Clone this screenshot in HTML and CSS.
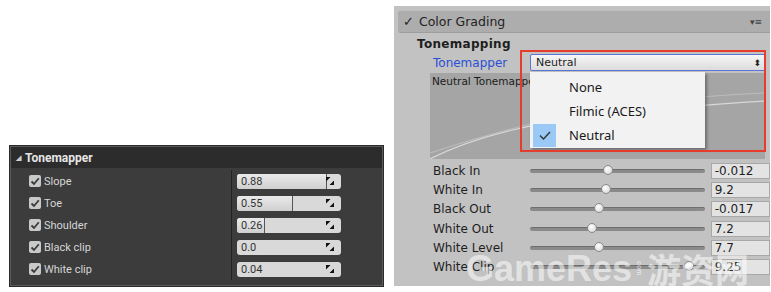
FILE: index.html
```html
<!DOCTYPE html>
<html>
<head>
<meta charset="utf-8">
<link rel="stylesheet" href="styles.css">
</head>
<body>
<div class="page">
  <div class="ue">
    <div class="ue-head"><span class="tri">◢</span>Tonemapper</div>
    <div class="ue-body">
      <div class="ue-row"><div class="ue-name"><span class="cb"><svg viewBox="0 0 12 12" width="12" height="12"><path d="M2.5 6.5 L5 9 L9.8 3.2" fill="none" stroke="#3a3a3a" stroke-width="1.8"/></svg></span>Slope</div><div class="ue-val"><div class="num"><div class="fill" style="width:86%"></div><span class="nt">0.88</span><svg class="rs" viewBox="0 0 8 8" width="8" height="8"><path d="M0 0h4.5L0 4.5z M8 8H3.5l4.5-4.5z" fill="#111"/></svg></div></div></div>
      <div class="ue-row"><div class="ue-name"><span class="cb"><svg viewBox="0 0 12 12" width="12" height="12"><path d="M2.5 6.5 L5 9 L9.8 3.2" fill="none" stroke="#3a3a3a" stroke-width="1.8"/></svg></span>Toe</div><div class="ue-val"><div class="num"><div class="fill" style="width:53%"></div><span class="nt">0.55</span><svg class="rs" viewBox="0 0 8 8" width="8" height="8"><path d="M0 0h4.5L0 4.5z M8 8H3.5l4.5-4.5z" fill="#111"/></svg></div></div></div>
      <div class="ue-row"><div class="ue-name"><span class="cb"><svg viewBox="0 0 12 12" width="12" height="12"><path d="M2.5 6.5 L5 9 L9.8 3.2" fill="none" stroke="#3a3a3a" stroke-width="1.8"/></svg></span>Shoulder</div><div class="ue-val"><div class="num"><div class="fill" style="width:26%"></div><span class="nt">0.26</span><svg class="rs" viewBox="0 0 8 8" width="8" height="8"><path d="M0 0h4.5L0 4.5z M8 8H3.5l4.5-4.5z" fill="#111"/></svg></div></div></div>
      <div class="ue-row"><div class="ue-name"><span class="cb"><svg viewBox="0 0 12 12" width="12" height="12"><path d="M2.5 6.5 L5 9 L9.8 3.2" fill="none" stroke="#3a3a3a" stroke-width="1.8"/></svg></span>Black clip</div><div class="ue-val"><div class="num"><span class="nt">0.0</span><svg class="rs" viewBox="0 0 8 8" width="8" height="8"><path d="M0 0h4.5L0 4.5z M8 8H3.5l4.5-4.5z" fill="#111"/></svg></div></div></div>
      <div class="ue-row"><div class="ue-name"><span class="cb"><svg viewBox="0 0 12 12" width="12" height="12"><path d="M2.5 6.5 L5 9 L9.8 3.2" fill="none" stroke="#3a3a3a" stroke-width="1.8"/></svg></span>White clip</div><div class="ue-val"><div class="num"><span class="nt">0.04</span><svg class="rs" viewBox="0 0 8 8" width="8" height="8"><path d="M0 0h4.5L0 4.5z M8 8H3.5l4.5-4.5z" fill="#111"/></svg></div></div></div>
    </div>
  </div>

  <div class="unity">
    <div class="u-head"><span class="u-check">✓</span><span class="u-title">Color Grading</span><span class="u-menu">▾≡</span></div>
    <div class="u-section">Tonemapping</div>
    <div class="u-row u-tm"><div class="u-label blue">Tonemapper</div><div class="u-drop"><span>Neutral</span><span class="u-arr">⬍</span></div></div>
    <div class="u-graph">
      <span class="g-title">Neutral Tonemapper</span>
      <svg class="g-curve" viewBox="0 0 335 86" width="335" height="86" preserveAspectRatio="none"><path d="M0 86 C60 55 140 40 335 28" fill="none" stroke="#d8d8d8" stroke-width="1.2"/><path d="M0 80 C120 40 220 25 335 20" fill="none" stroke="#bdbdbd" stroke-width="1"/></svg>
    </div>
    <div class="u-sliders">
      <div class="u-row"><div class="u-label">Black In</div><div class="track"><span class="thumb" style="left:78px"></span></div><div class="field">-0.012</div></div>
      <div class="u-row"><div class="u-label">White In</div><div class="track"><span class="thumb" style="left:76px"></span></div><div class="field">9.2</div></div>
      <div class="u-row"><div class="u-label">Black Out</div><div class="track"><span class="thumb" style="left:69px"></span></div><div class="field">-0.017</div></div>
      <div class="u-row"><div class="u-label">White Out</div><div class="track"><span class="thumb" style="left:62px"></span></div><div class="field">7.2</div></div>
      <div class="u-row"><div class="u-label">White Level</div><div class="track"><span class="thumb" style="left:69px"></span></div><div class="field">7.7</div></div>
      <div class="u-row"><div class="u-label">White Clip</div><div class="track"><span class="thumb" style="left:159px"></span></div><div class="field">9.25</div></div>
    </div>

    <div class="u-menu-pop">
      <div class="mi"><span class="mc"></span>None</div>
      <div class="mi"><span class="mc"></span>Filmic (ACES)</div>
      <div class="mi"><span class="mc on"><svg viewBox="0 0 16 16" width="16" height="16"><path d="M3 8.5 L6.5 12 L13 5" fill="none" stroke="#333" stroke-width="1.4"/></svg></span>Neutral</div>
    </div>
    <div class="red-box"></div>
    <div class="watermark"><span class="wm-en">GameRes</span><span class="wm-com">com</span><span class="wm-cn">游资网</span></div>
  </div>
</div>
</body>
</html>
```

FILE: styles.css
```css
html, body { margin: 0; padding: 0; background: #ffffff; }
.page { display: flex; align-items: flex-start; width: 771px; height: 292px; overflow: hidden; }

/* Unreal panel */
.ue {
  margin: 146px 0 0 10px;
  width: 371px;
  height: 138px;
  background: #3c3c3c;
  border: 1px solid #5a5a5a;
  outline: 1px solid #2a2a2a;
  font-family: Roboto, "Liberation Sans", sans-serif;
}
.ue-head {
  height: 21px;
  background: #2c2c2c;
  color: #e6e6e6;
  font-weight: bold;
  font-size: 12px;
  display: flex;
  align-items: center;
  padding-left: 5px;
}
.tri { font-size: 7px; color: #cfcfcf; margin-right: 4px; }
.ue-body { padding-top: 2px; position: relative; }
.ue-row { display: flex; height: 22px; align-items: center; }
.ue-name {
  width: 221px;
  height: 22px;
  border-right: 1px solid #222;
  display: flex;
  align-items: center;
  padding-left: 18px;
  box-sizing: border-box;
  color: #d6d6d6;
  font-size: 11px;
}
.cb {
  width: 12px; height: 12px;
  background: #c9c9c9;
  border-radius: 2px;
  margin-right: 3px;
  display: inline-flex;
}
.ue-val { padding-left: 5px; display: flex; align-items: center; }
.num {
  position: relative;
  width: 104px;
  height: 15px;
  border-radius: 3px;
  background: #d9d9d9;
  display: flex;
  align-items: center;
  overflow: hidden;
}
.fill {
  position: absolute; left: 0; top: 0; bottom: 0;
  background: linear-gradient(#eaeaea, #cfcfcf);
  border-right: 1px solid #555;
}
.nt { position: relative; font-size: 11px; color: #333; padding-left: 4px; flex: 1; }
.rs { position: relative; margin-right: 7px; }

/* Unity panel */
.unity {
  position: relative;
  margin: 6px 0 0 11px;
  width: 376px;
  height: 280px;
  background: #c2c2c2;
  font-family: "DejaVu Sans", Verdana, sans-serif;
  font-size: 12px;
  color: #1e1e1e;
}
.u-head {
  margin: 4px 0 0 4px;
  height: 21px;
  background: #adadad;
  border-top: 1px solid #bdbdbd;
  border-bottom: 1px solid #9d9d9d;
  border-radius: 3px 0 0 3px;
  display: flex;
  align-items: center;
  padding-left: 5px;
}
.u-check { font-size: 13px; font-weight: bold; margin-right: 5px; }
.u-title { font-size: 12.5px; color: #222; flex: 1; }
.u-menu { font-size: 9px; color: #444; margin-right: 8px; }
.u-section { font-weight: bold; padding-left: 23px; margin-top: 3px; height: 17px; line-height: 17px; letter-spacing: 0.3px; }
.u-row { display: flex; align-items: center; height: 19.3px; }
.u-label { width: 97px; padding-left: 39px; flex: none; }
.blue { color: #2a4fd6; }
.u-tm { height: 19px; margin-top: 0; }
.u-drop {
  width: 236px;
  height: 17px;
  box-sizing: border-box;
  border: 1px solid #5b75d8;
  border-radius: 2px;
  background: linear-gradient(#f6f6f6, #dcdcdc);
  display: flex;
  align-items: center;
  padding: 0 4px 0 5px;
  font-size: 11px;
}
.u-drop span:first-child { flex: 1; }
.u-arr { font-size: 9px; }
.u-graph {
  position: relative;
  margin: 1px 0 0 36px;
  width: 335px;
  height: 86px;
  background: #a5a5a5;
}
.g-title { position: absolute; left: 2px; top: 2px; font-size: 10.5px; color: #1a1a1a; }
.g-curve { position: absolute; left: 0; top: 0; }
.u-sliders { padding-top: 2px; }
.track {
  position: relative;
  width: 177px;
  height: 3px;
  background: #8a8a8a;
  border-top: 1px solid #6e6e6e;
  border-radius: 2px;
  margin-right: 6px;
}
.thumb {
  position: absolute;
  top: -5px;
  width: 10px; height: 10px;
  margin-left: -5px;
  border-radius: 50%;
  background: radial-gradient(circle at 40% 35%, #ffffff, #d0d0d0);
  border: 1px solid #8a8a8a;
  box-sizing: border-box;
}
.field {
  width: 60px;
  height: 16px;
  box-sizing: border-box;
  background: #e3e3e3;
  border: 1px solid #a8a8a8;
  padding-left: 3px;
  line-height: 14px;
  font-size: 12px;
}

.u-menu-pop {
  position: absolute;
  left: 136px; top: 66px;
  width: 175px;
  height: 76px;
  background: #f2f2f2;
  box-shadow: 2px 2px 3px rgba(0,0,0,0.35);
  font-family: "Noto Sans", "Open Sans", sans-serif;
  font-size: 13px;
  color: #1a1a1a;
  padding-top: 3px;
  box-sizing: border-box;
}
.mi { display: flex; align-items: center; height: 24px; }
.mc { width: 23px; height: 23px; margin: 0 13px 0 3px; display: inline-flex; align-items: center; justify-content: center; }
.mc.on { background: #99c9f4; }
.red-box {
  position: absolute;
  left: 126px; top: 44px;
  width: 246px; height: 102px;
  box-sizing: border-box;
  border: 2px solid #e63c2e;
}
.watermark {
  position: absolute;
  left: 72px; top: 238px;
  display: flex;
  align-items: center;
  color: rgba(255,255,255,0.55);
  font-weight: bold;
  pointer-events: none;
}
.wm-en { font-family: "Liberation Sans", Arial, sans-serif; font-size: 36px; }
.wm-com { font-family: "Liberation Sans", sans-serif; font-size: 7px; writing-mode: vertical-rl; margin: 0 4px; }
.wm-cn { font-family: "Noto Sans CJK SC", sans-serif; font-size: 34px; }
```
